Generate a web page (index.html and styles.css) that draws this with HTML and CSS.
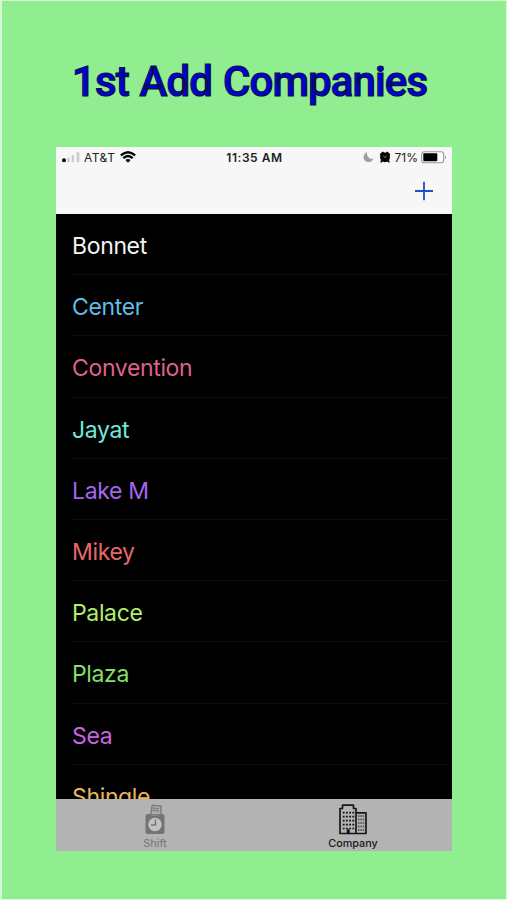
FILE: index.html
```html
<!DOCTYPE html>
<html lang="en">
<head>
    <meta charset="UTF-8">
    <meta name="viewport" content="width=device-width, initial-scale=1.0">
    <title>Companies</title>
    <link rel="stylesheet" href="styles.css">
</head>
<body>
    <h1 class="title">1st Add Companies</h1>
    <div class="phone">
        <header class="header">
            <div class="status">
                <div class="status-left">
                    <svg class="signal" width="18" height="12" viewBox="0 0 18 12">
                        <circle cx="2" cy="9.2" r="2" fill="#000"/>
                        <path d="M5.3 6.5h2.3v4.7H5.3zM9.7 4H12v7.200H9.700zM14.600 1.200h2.800v10h-2.800z" fill="#cdcdcd"/>
                    </svg>
                    <span class="carrier">AT&amp;T</span>
                    <svg class="wifi" width="16" height="12" viewBox="0 0 16 12">
                        <path d="M.8 4.400Q8-2 15.200 4.400M3.300 7.200Q8 2.800 12.700 7.200" fill="none" stroke="#000" stroke-width="2.300"/>
                        <path d="M5.400 9Q8 6.900 10.600 9L8 11.700z" fill="#000"/>
                    </svg>
                </div>
                <span class="time">11:35 AM</span>
                <div class="status-right">
                    <svg class="moon" width="11" height="12" viewBox="0 0 11 12">
                        <path d="M4 1C-.5 3-.5 9 3.500 10.700c3 1.200 6-.4 7-3C6.800 8.500 3.500 6 4 1z" fill="#a0a0a0"/>
                    </svg>
                    <svg class="alarm" width="12" height="12" viewBox="0 0 12 12">
                        <circle cx="6" cy="6.300" r="4.900"/>
                        <path d="M.7 3.300L3.600.5l1.600 1L1.800 4.800zM11.300 3.300L8.400.5l-1.600 1 3.400 3.300zM2 9l2 1-1.500 1.500H1.200zM10 9l-2 1 1.500 1.500h1.300z"/>
                        <path d="M4.300 5L6 6.500l1.800-1.500" fill="none" stroke="#aaa" stroke-width=".8"/>
                    </svg>
                    <span class="percent">71%</span>
                    <svg class="battery" width="26" height="13" viewBox="0 0 26 13">
                        <rect x=".7" y=".8" width="22" height="11" rx="2.800" fill="#fcfcfc" stroke="#999" stroke-width="1.100"/>
                        <rect x="2.300" y="2.300" width="14" height="8" rx="1"/>
                        <path d="M24 4.300q2 2 0 4z" fill="#999"/>
                    </svg>
                </div>
            </div>
            <button class="add" aria-label="Add company">
                <svg width="18" height="20" viewBox="0 0 18 20">
                    <path d="M9 .8v18.400M0 10h18" stroke="#1d50c8" stroke-width="1.800"/>
                </svg>
            </button>
        </header>
        <ul class="list">
            <li class="white">Bonnet</li>
            <li class="blue">Center</li>
            <li class="pink">Convention</li>
            <li class="aqua">Jayat</li>
            <li class="violet">Lake M</li>
            <li class="red">Mikey</li>
            <li class="lime">Palace</li>
            <li class="green">Plaza</li>
            <li class="purple">Sea</li>
            <li class="orange">Shingle</li>
        </ul>
        <nav class="tabs">
            <a class="tab">
                <svg width="22" height="32" viewBox="0 0 22 32">
                    <path d="M7 9.500L8.200 1.200l8.800 1V11H7z" fill="#aaa" stroke="#777" stroke-width="1.300"/>
                    <path d="M9 4l6 .7M8.600 6.300l6.400.7" stroke="#777"/>
                    <path d="M4 10h3l.8 2H14l.8-2H18q2.500 0 2.500 2.500v15q0 2.500-2.500 2.500H4q-2.500 0-2.500-2.500v-15Q1.500 10 4 10z" fill="#747474"/>
                    <circle cx="11" cy="20.500" r="6.700" fill="#c3c3c3"/>
                    <path d="M11.500 15.500V21H7" fill="none" stroke="#747474" stroke-width="1.500"/>
                </svg>
                <span>Shift</span>
            </a>
            <a class="tab active">
                <svg width="28" height="32" viewBox="0 0 28 32">
                    <path d="M1 29.500V4.500h2.500V1.200h11v3.300H17v25zM17 8.800h10v20.700H17" fill="#b3b3b3" stroke="#171717" stroke-width="1.700" stroke-linejoin="round"/>
                    <path d="M3.700 8.700h11.600M3.700 12.700h11.600M3.700 16.700h11.600M3.700 20.700h11.600M3.700 24.500h11.600" stroke="#171717" stroke-width="1.700" stroke-dasharray="1.900 1.300"/>
                    <path d="M19 12h6.500M19 15.500h6.500M19 19h6.500M19 22.500h6.500M19 26h6.500" stroke="#555" stroke-width="1.800" stroke-dasharray="1.400 1"/>
                    <path d="M7.700 29.500V26q1.500-2 3 0v3.500z" fill="#111"/>
                </svg>
                <span>Company</span>
            </a>
        </nav>
    </div>
</body>
</html>
```

FILE: styles.css
```css
* {
    box-sizing: border-box;
}

body {
    margin: 0;
    height: 900px;
    background: #90ee90;
    border: solid #d6fad6;
    border-width: 1px 1px 1px 2px;
    font-family: Inter, "Liberation Sans", sans-serif;
    overflow: hidden;
}

.title {
    margin: 0;
    padding: 56px 0 0 70px;
    height: 146px;
    font-family: Roboto, sans-serif;
    font-size: 42px;
    line-height: 49px;
    font-weight: 500;
    letter-spacing: -0.9px;
    word-spacing: 1.3px;
    white-space: nowrap;
    color: #0000e0;
    -webkit-text-stroke: 1.2px #08103c;
}

.phone {
    width: 396px;
    height: 704px;
    margin-left: 54px;
    display: flex;
    flex-direction: column;
    background: #000;
}

.header {
    flex: none;
    height: 67px;
    background: #f7f7f7;
}

.status {
    display: grid;
    grid-template-columns: 1fr auto 1fr;
    align-items: center;
    height: 20px;
    padding: 0 5px 0 6px;
    font-size: 12px;
    color: #222;
}

.status-left,
.status-right {
    display: flex;
    align-items: center;
}

.status-right {
    justify-content: flex-end;
}

.carrier {
    margin: 0 5px 0 4px;
    letter-spacing: 0.5px;
}

.time {
    font-weight: 600;
    letter-spacing: 0.55px;
}

.alarm {
    margin: 0 4px 0 5px;
}

.percent {
    margin-right: 3px;
}

.add {
    display: block;
    margin: 14px 19px 0 auto;
    padding: 0;
    border: 0;
    background: none;
}

.add svg {
    display: block;
}

.list {
    flex: 1;
    min-height: 0;
    margin: 0;
    padding: 0 4px 0 16px;
    list-style: none;
    overflow: hidden;
}

.list li {
    height: 61.2px;
    padding-top: 1px;
    line-height: 62px;
    font-size: 23px;
    letter-spacing: -0.35px;
    border-bottom: 1px solid #0c0c0c;
}

.white { color: #f4f4f4; }
.blue { color: #60bde9; }
.pink { color: #de628b; }
.aqua { color: #70e9dc; }
.violet { color: #a566ed; }
.red { color: #e86868; }
.lime { color: #b0ee6a; }
.green { color: #83df6b; }
.purple { color: #c965e2; }
.orange { color: #edb35c; }

.tabs {
    flex: none;
    display: flex;
    height: 52px;
    background: #b3b3b3;
}

.tab {
    flex: 1;
    display: flex;
    flex-direction: column;
    align-items: center;
    padding-top: 5px;
    font-size: 10.8px;
    line-height: 15px;
    font-weight: 500;
    color: #7c7c7c;
}

.active {
    color: #181818;
}
```
